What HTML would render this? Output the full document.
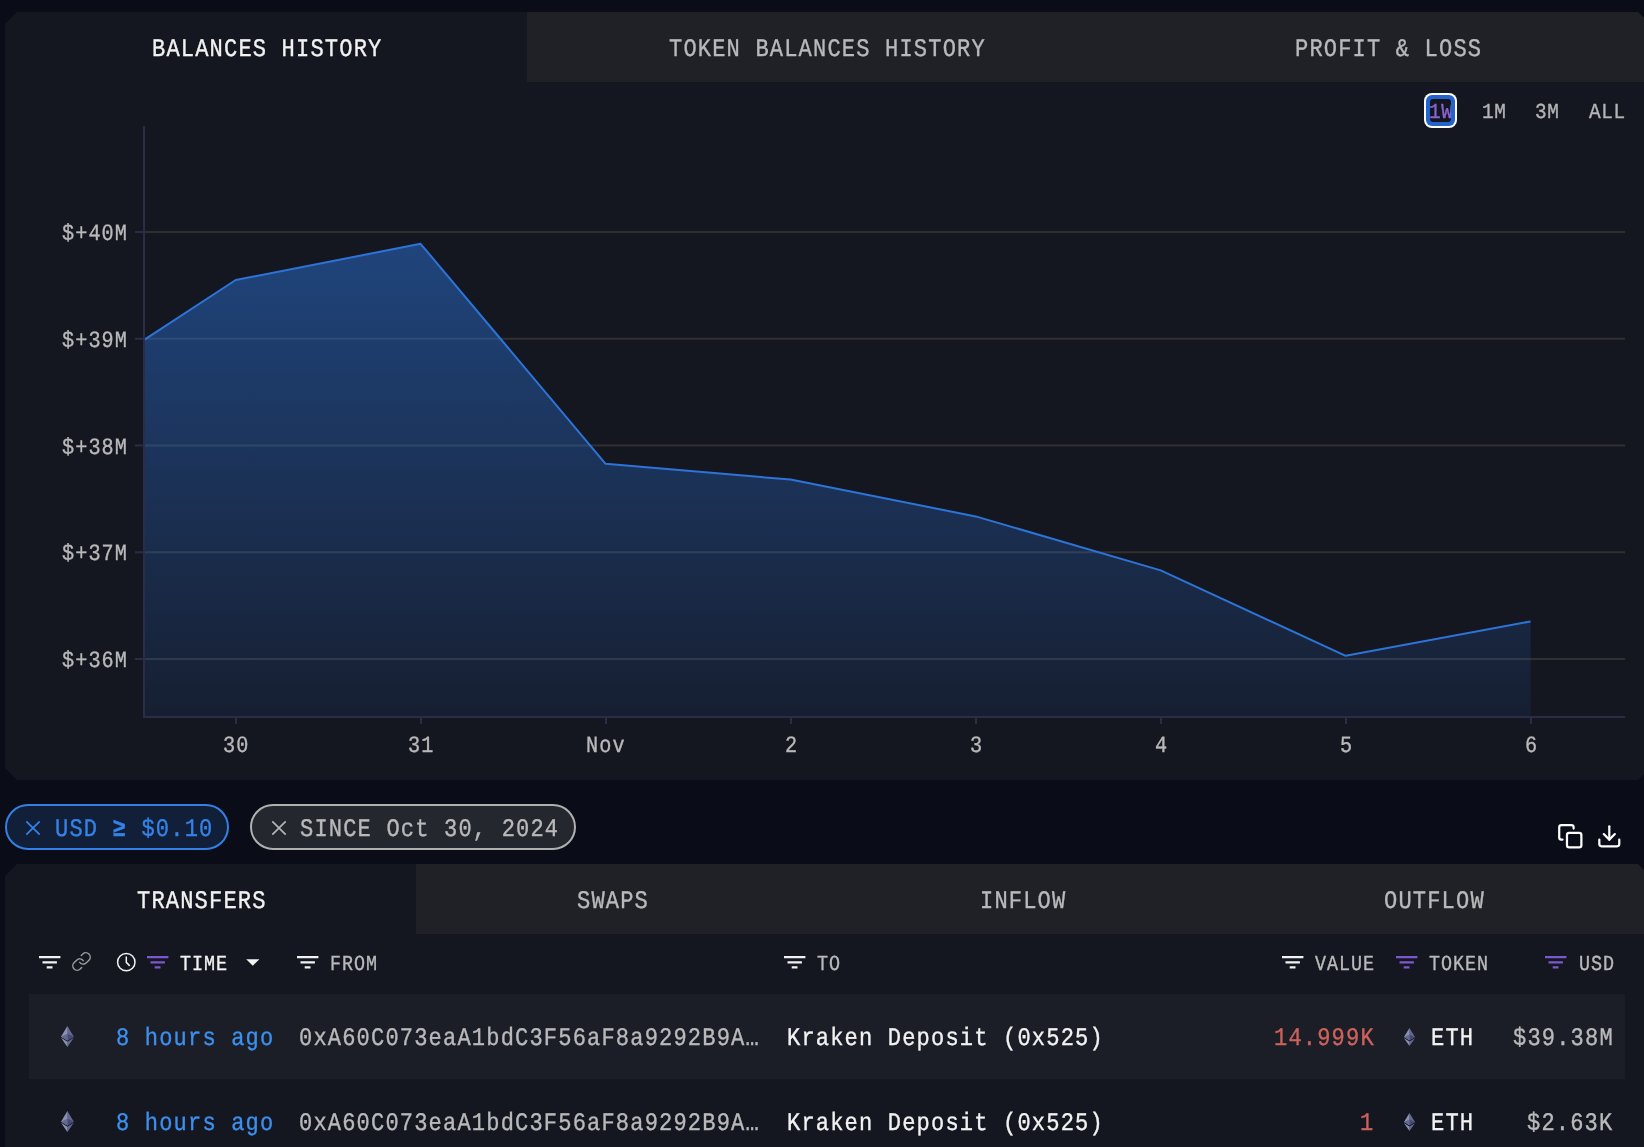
<!DOCTYPE html>
<html lang="en"><head><meta charset="utf-8"><title>Balances History</title>
<style>
html,body{margin:0;padding:0;background:#0a0d17;}
body{position:relative;width:1644px;height:1147px;overflow:hidden;font-family:"Liberation Mono","DejaVu Sans Mono",monospace;}
.t{position:absolute;white-space:pre;display:block;line-height:30px;-webkit-text-stroke:0.35px currentColor;}
.f20{font-size:20px;letter-spacing:1.043px;transform-origin:0 20px;transform:skewX(0.05deg) scale(0.92,1.0665);}
.f22{font-size:22px;letter-spacing:1.148px;transform-origin:0 20px;transform:skewX(0.05deg) scale(0.92,1.0592);}
.f24{font-size:24px;letter-spacing:1.252px;transform-origin:0 21px;transform:skewX(0.05deg) scale(0.92,1.0532);}
#w{position:absolute;left:0;top:0;width:1644px;height:1147px;will-change:transform;}
.panel{position:absolute;}
svg{display:block;overflow:visible}
</style></head><body><div id="w">
<section aria-label="Balances history chart">
<div class="panel" style="left:5px;top:12px;width:1645px;height:768px;background:#141620;clip-path:polygon(12px 0,1633px 0,1645px 12px,1645px 756px,1633px 768px,12px 768px,0 756px,0 12px)">
<div style="position:absolute;left:522px;top:0;width:1123px;height:70px;background:#202126"></div>
</div>
<span class="t f24 " style="left:151.58px;top:35px;color:#f2f2f2;">BALANCES HISTORY</span>
<span class="t f24 " style="left:668.58px;top:35px;color:#b9b9bb;">TOKEN BALANCES HISTORY</span>
<span class="t f24 " style="left:1294.58px;top:35px;color:#b9b9bb;">PROFIT &amp; LOSS</span>
<div style="position:absolute;left:1424px;top:93px;width:33px;height:35px;box-sizing:border-box;border-radius:8px;background:#fff;"></div>
<div style="position:absolute;left:1426px;top:95px;width:29px;height:31px;box-sizing:border-box;border-radius:6px;background:#2563cc;"></div>
<div style="position:absolute;left:1430px;top:99px;width:21px;height:23px;box-sizing:border-box;border-radius:3px;background:#13161f;overflow:hidden">
<span class="t f20 " style="left:-0.87px;top:-1px;color:#8a63d2;letter-spacing:0.680px;transform:skewX(0.05deg) scale(0.97,1.0665);">1W</span>
</div>
<span class="t f20 " style="left:1481.83px;top:98px;color:#b4b4b6;letter-spacing:0.680px;transform:skewX(0.05deg) scale(0.97,1.0665);">1M</span>
<span class="t f20 " style="left:1535.33px;top:98px;color:#b4b4b6;letter-spacing:0.680px;transform:skewX(0.05deg) scale(0.97,1.0665);">3M</span>
<span class="t f20 " style="left:1588.63px;top:98px;color:#b4b4b6;letter-spacing:0.680px;transform:skewX(0.05deg) scale(0.97,1.0665);">ALL</span>
<svg class="chart" width="1644" height="1147" viewBox="0 0 1644 1147" style="position:absolute;left:0;top:0"><defs><linearGradient id="g" x1="0" y1="243.8" x2="0" y2="716.6" gradientUnits="userSpaceOnUse"><stop offset="0" stop-color="#2b73d8" stop-opacity="0.5"/><stop offset="1" stop-color="#2b73d8" stop-opacity="0.095"/></linearGradient></defs><line x1="144" y1="232" x2="1625" y2="232" stroke="#303031" stroke-width="2"/><line x1="135" y1="232" x2="144" y2="232" stroke="#2c2c46" stroke-width="2"/><line x1="144" y1="338.75" x2="1625" y2="338.75" stroke="#303031" stroke-width="2"/><line x1="135" y1="338.75" x2="144" y2="338.75" stroke="#2c2c46" stroke-width="2"/><line x1="144" y1="445.5" x2="1625" y2="445.5" stroke="#303031" stroke-width="2"/><line x1="135" y1="445.5" x2="144" y2="445.5" stroke="#2c2c46" stroke-width="2"/><line x1="144" y1="552.25" x2="1625" y2="552.25" stroke="#303031" stroke-width="2"/><line x1="135" y1="552.25" x2="144" y2="552.25" stroke="#2c2c46" stroke-width="2"/><line x1="144" y1="659" x2="1625" y2="659" stroke="#303031" stroke-width="2"/><line x1="135" y1="659" x2="144" y2="659" stroke="#2c2c46" stroke-width="2"/><polygon points="144.5,339.7 235.7,280 420.6,243.8 605.6,463.8 790.6,479.6 975.7,516.4 1160.7,570.4 1345.7,655.8 1530.6,621.4 1530.6,716.2 144.5,716.2" fill="url(#g)"/><polyline points="144.5,339.7 235.7,280 420.6,243.8 605.6,463.8 790.6,479.6 975.7,516.4 1160.7,570.4 1345.7,655.8 1530.6,621.4" fill="none" stroke="#2d74d8" stroke-width="2" stroke-linejoin="round"/><line x1="144" y1="126" x2="144" y2="718" stroke="#2c2c46" stroke-width="2"/><line x1="143" y1="717" x2="1625" y2="717" stroke="#2c2c46" stroke-width="2"/><line x1="236" y1="717" x2="236" y2="724" stroke="#2c2c46" stroke-width="2"/><line x1="421" y1="717" x2="421" y2="724" stroke="#2c2c46" stroke-width="2"/><line x1="606" y1="717" x2="606" y2="724" stroke="#2c2c46" stroke-width="2"/><line x1="791" y1="717" x2="791" y2="724" stroke="#2c2c46" stroke-width="2"/><line x1="976" y1="717" x2="976" y2="724" stroke="#2c2c46" stroke-width="2"/><line x1="1161" y1="717" x2="1161" y2="724" stroke="#2c2c46" stroke-width="2"/><line x1="1346" y1="717" x2="1346" y2="724" stroke="#2c2c46" stroke-width="2"/><line x1="1531" y1="717" x2="1531" y2="724" stroke="#2c2c46" stroke-width="2"/></svg>
<span class="t f22 " style="left:61.53px;top:220px;color:#b9b9bb;">$+40M</span>
<span class="t f22 " style="left:61.53px;top:327px;color:#b9b9bb;">$+39M</span>
<span class="t f22 " style="left:61.53px;top:434px;color:#b9b9bb;">$+38M</span>
<span class="t f22 " style="left:61.53px;top:540px;color:#b9b9bb;">$+37M</span>
<span class="t f22 " style="left:61.53px;top:647px;color:#b9b9bb;">$+36M</span>
<span class="t f22 " style="left:223.03px;top:732px;color:#b9b9bb;">30</span>
<span class="t f22 " style="left:408.03px;top:732px;color:#b9b9bb;">31</span>
<span class="t f22 " style="left:586.43px;top:732px;color:#b9b9bb;">Nov</span>
<span class="t f22 " style="left:784.63px;top:732px;color:#b9b9bb;">2</span>
<span class="t f22 " style="left:969.63px;top:732px;color:#b9b9bb;">3</span>
<span class="t f22 " style="left:1154.63px;top:732px;color:#b9b9bb;">4</span>
<span class="t f22 " style="left:1339.63px;top:732px;color:#b9b9bb;">5</span>
<span class="t f22 " style="left:1524.63px;top:732px;color:#b9b9bb;">6</span>
</section>
<section aria-label="Active filters">
<div style="position:absolute;left:5px;top:804px;width:224px;height:46px;box-sizing:border-box;border:2px solid #3280e6;border-radius:23px;background:#111f38"></div>
<div style="position:absolute;left:250px;top:804px;width:326px;height:46px;box-sizing:border-box;border:2px solid #b0b0b0;border-radius:23px;background:#25272f"></div>
<svg style="position:absolute;left:25px;top:820px" width="16" height="16" viewBox="0 0 16 16"><path d="M1.3 1.3L14.7 14.7M14.7 1.3L1.3 14.7" stroke="#3582e8" stroke-width="1.7" fill="none"/></svg>
<svg style="position:absolute;left:271px;top:820px" width="16" height="16" viewBox="0 0 16 16"><path d="M1.3 1.3L14.7 14.7M14.7 1.3L1.3 14.7" stroke="#b5b5b5" stroke-width="1.7" fill="none"/></svg>
<span class="t f24 " style="left:55.08px;top:815px;color:#3582e8;">USD <b>≥</b> $0.10</span>
<span class="t f24 " style="left:300.08px;top:815px;color:#b9b9bb;">SINCE Oct 30, 2024</span>
<svg style="position:absolute;left:1556.7px;top:822.6px" width="26.6" height="26.6" viewBox="0 0 24 24" fill="none" stroke="#fff" stroke-width="2" stroke-linecap="round" stroke-linejoin="round"><rect x="9" y="9" width="13" height="13" rx="2" ry="2"/><path d="M5 15H4a2 2 0 0 1-2-2V4a2 2 0 0 1 2-2h9a2 2 0 0 1 2 2v1"/></svg>
<svg style="position:absolute;left:1595.7px;top:822.7px" width="26.6" height="26.6" viewBox="0 0 24 24" fill="none" stroke="#fff" stroke-width="2" stroke-linecap="round" stroke-linejoin="round"><path d="M21 15v4a2 2 0 0 1-2 2H5a2 2 0 0 1-2-2v-4"/><polyline points="7 10 12 15 17 10"/><line x1="12" y1="15" x2="12" y2="3"/></svg>
</section>
<section aria-label="Transfers table">
<div class="panel" style="left:5px;top:864px;width:1645px;height:300px;background:#141620;clip-path:polygon(12px 0,1633px 0,1645px 12px,1645px 300px,0 300px,0 12px)">
<div style="position:absolute;left:411px;top:0;width:1234px;height:70px;background:#202126"></div>
<div style="position:absolute;left:24px;top:130px;width:1596px;height:85px;background:#1b1d27"></div>
</div>
<span class="t f24 " style="left:137.28px;top:887px;color:#f2f2f2;">TRANSFERS</span>
<span class="t f24 " style="left:577.08px;top:887px;color:#b9b9bb;">SWAPS</span>
<span class="t f24 " style="left:980.48px;top:887px;color:#b9b9bb;">INFLOW</span>
<span class="t f24 " style="left:1384.28px;top:887px;color:#b9b9bb;">OUTFLOW</span>
<svg style="position:absolute;left:39.15px;top:955px" width="22" height="14" viewBox="0 0 22 14"><path d="M0 1h21.4v2.25H0zM3.5 6.2h14.4v2.25H3.5zM7.7 11.3h5.8v2.25H7.7z" fill="#f2f2f2"/></svg>
<svg style="position:absolute;left:147.25px;top:955px" width="22" height="14" viewBox="0 0 22 14"><path d="M0 1h21.4v2.25H0zM3.5 6.2h14.4v2.25H3.5zM7.7 11.3h5.8v2.25H7.7z" fill="#7d58cc"/></svg>
<svg style="position:absolute;left:296.95px;top:955px" width="22" height="14" viewBox="0 0 22 14"><path d="M0 1h21.4v2.25H0zM3.5 6.2h14.4v2.25H3.5zM7.7 11.3h5.8v2.25H7.7z" fill="#f2f2f2"/></svg>
<svg style="position:absolute;left:784.05px;top:955px" width="22" height="14" viewBox="0 0 22 14"><path d="M0 1h21.4v2.25H0zM3.5 6.2h14.4v2.25H3.5zM7.7 11.3h5.8v2.25H7.7z" fill="#f2f2f2"/></svg>
<svg style="position:absolute;left:1282.05px;top:955px" width="22" height="14" viewBox="0 0 22 14"><path d="M0 1h21.4v2.25H0zM3.5 6.2h14.4v2.25H3.5zM7.7 11.3h5.8v2.25H7.7z" fill="#f2f2f2"/></svg>
<svg style="position:absolute;left:1396.25px;top:955px" width="22" height="14" viewBox="0 0 22 14"><path d="M0 1h21.4v2.25H0zM3.5 6.2h14.4v2.25H3.5zM7.7 11.3h5.8v2.25H7.7z" fill="#7d58cc"/></svg>
<svg style="position:absolute;left:1545.25px;top:955px" width="22" height="14" viewBox="0 0 22 14"><path d="M0 1h21.4v2.25H0zM3.5 6.2h14.4v2.25H3.5zM7.7 11.3h5.8v2.25H7.7z" fill="#7d58cc"/></svg>
<svg style="position:absolute;left:71px;top:951px" width="21" height="21" viewBox="0 0 24 24" fill="none" stroke="#9a9a9c" stroke-width="1.7" stroke-linecap="round" stroke-linejoin="round"><path d="M10 13a5 5 0 0 0 7.54.54l3-3a5 5 0 0 0-7.07-7.07l-1.72 1.71"/><path d="M14 11a5 5 0 0 0-7.54-.54l-3 3a5 5 0 0 0 7.07 7.07l1.71-1.71"/></svg>
<svg style="position:absolute;left:115px;top:951px" width="23" height="23" viewBox="0 0 23 23" fill="none" stroke="#f2f2f2" stroke-width="1.5" stroke-linecap="round" stroke-linejoin="round"><circle cx="11.3" cy="11.15" r="8.7"/><path d="M11.3 6v5.4l3 3"/></svg>
<span class="t f20 " style="left:180.48px;top:950px;color:#f2f2f2;">TIME</span>
<svg style="position:absolute;left:245.5px;top:959px" width="14" height="8" viewBox="0 0 14 8"><path d="M0.2 0.2h13.2L6.8 6.8z" fill="#f2f2f2"/></svg>
<span class="t f20 " style="left:330.08px;top:950px;color:#b9b9bb;">FROM</span>
<span class="t f20 " style="left:817.28px;top:950px;color:#b9b9bb;">TO</span>
<span class="t f20 " style="left:1315.28px;top:950px;color:#b9b9bb;">VALUE</span>
<span class="t f20 " style="left:1429.48px;top:950px;color:#b9b9bb;">TOKEN</span>
<span class="t f20 " style="left:1578.98px;top:950px;color:#b9b9bb;">USD</span>
<svg style="position:absolute;left:60.63px;top:1025.50px" width="12.83" height="20.90" viewBox="0 0 256 417"><polygon fill="#62688f" points="127.96 0 125.17 9.5 125.17 285.17 127.96 287.96 255.92 212.32"/><polygon fill="#8a92b2" points="127.96 0 0 212.32 127.96 287.96 127.96 154.16"/><polygon fill="#62688f" points="127.96 312.19 126.39 314.11 126.39 412.31 127.96 416.91 256 236.59"/><polygon fill="#8a92b2" points="127.96 416.91 127.96 312.19 0 236.59"/><polygon fill="#454a75" points="127.96 287.96 255.92 212.32 127.96 154.16"/><polygon fill="#62688f" points="0 212.32 127.96 287.96 127.96 154.16"/></svg>
<span class="t f24 " style="left:116.18px;top:1024px;color:#3c90ee;">8 hours ago</span>
<span class="t f24 " style="left:298.88px;top:1024px;color:#b9b9bb;">0xA60C073eaA1bdC3F56aF8a9292B9A…</span>
<span class="t f24 " style="left:786.58px;top:1024px;color:#f2f2f2;">Kraken Deposit (0x525)</span>
<span class="t f24 " style="left:1273.58px;top:1024px;color:#cc625c;">14.999K</span>
<svg style="position:absolute;left:1404.31px;top:1027.50px" width="10.99" height="17.90" viewBox="0 0 256 417"><polygon fill="#62688f" points="127.96 0 125.17 9.5 125.17 285.17 127.96 287.96 255.92 212.32"/><polygon fill="#8a92b2" points="127.96 0 0 212.32 127.96 287.96 127.96 154.16"/><polygon fill="#62688f" points="127.96 312.19 126.39 314.11 126.39 412.31 127.96 416.91 256 236.59"/><polygon fill="#8a92b2" points="127.96 416.91 127.96 312.19 0 236.59"/><polygon fill="#454a75" points="127.96 287.96 255.92 212.32 127.96 154.16"/><polygon fill="#62688f" points="0 212.32 127.96 287.96 127.96 154.16"/></svg>
<span class="t f24 " style="left:1430.58px;top:1024px;color:#f2f2f2;">ETH</span>
<span class="t f24 " style="left:1512.88px;top:1024px;color:#b9b9bb;">$39.38M</span>
<svg style="position:absolute;left:60.63px;top:1110.50px" width="12.83" height="20.90" viewBox="0 0 256 417"><polygon fill="#62688f" points="127.96 0 125.17 9.5 125.17 285.17 127.96 287.96 255.92 212.32"/><polygon fill="#8a92b2" points="127.96 0 0 212.32 127.96 287.96 127.96 154.16"/><polygon fill="#62688f" points="127.96 312.19 126.39 314.11 126.39 412.31 127.96 416.91 256 236.59"/><polygon fill="#8a92b2" points="127.96 416.91 127.96 312.19 0 236.59"/><polygon fill="#454a75" points="127.96 287.96 255.92 212.32 127.96 154.16"/><polygon fill="#62688f" points="0 212.32 127.96 287.96 127.96 154.16"/></svg>
<span class="t f24 " style="left:116.18px;top:1109px;color:#3c90ee;">8 hours ago</span>
<span class="t f24 " style="left:298.88px;top:1109px;color:#b9b9bb;">0xA60C073eaA1bdC3F56aF8a9292B9A…</span>
<span class="t f24 " style="left:786.58px;top:1109px;color:#f2f2f2;">Kraken Deposit (0x525)</span>
<span class="t f24 " style="left:1359.98px;top:1109px;color:#cc625c;">1</span>
<svg style="position:absolute;left:1404.31px;top:1112.50px" width="10.99" height="17.90" viewBox="0 0 256 417"><polygon fill="#62688f" points="127.96 0 125.17 9.5 125.17 285.17 127.96 287.96 255.92 212.32"/><polygon fill="#8a92b2" points="127.96 0 0 212.32 127.96 287.96 127.96 154.16"/><polygon fill="#62688f" points="127.96 312.19 126.39 314.11 126.39 412.31 127.96 416.91 256 236.59"/><polygon fill="#8a92b2" points="127.96 416.91 127.96 312.19 0 236.59"/><polygon fill="#454a75" points="127.96 287.96 255.92 212.32 127.96 154.16"/><polygon fill="#62688f" points="0 212.32 127.96 287.96 127.96 154.16"/></svg>
<span class="t f24 " style="left:1430.58px;top:1109px;color:#f2f2f2;">ETH</span>
<span class="t f24 " style="left:1527.28px;top:1109px;color:#b9b9bb;">$2.63K</span>
</section>
</div></body></html>
